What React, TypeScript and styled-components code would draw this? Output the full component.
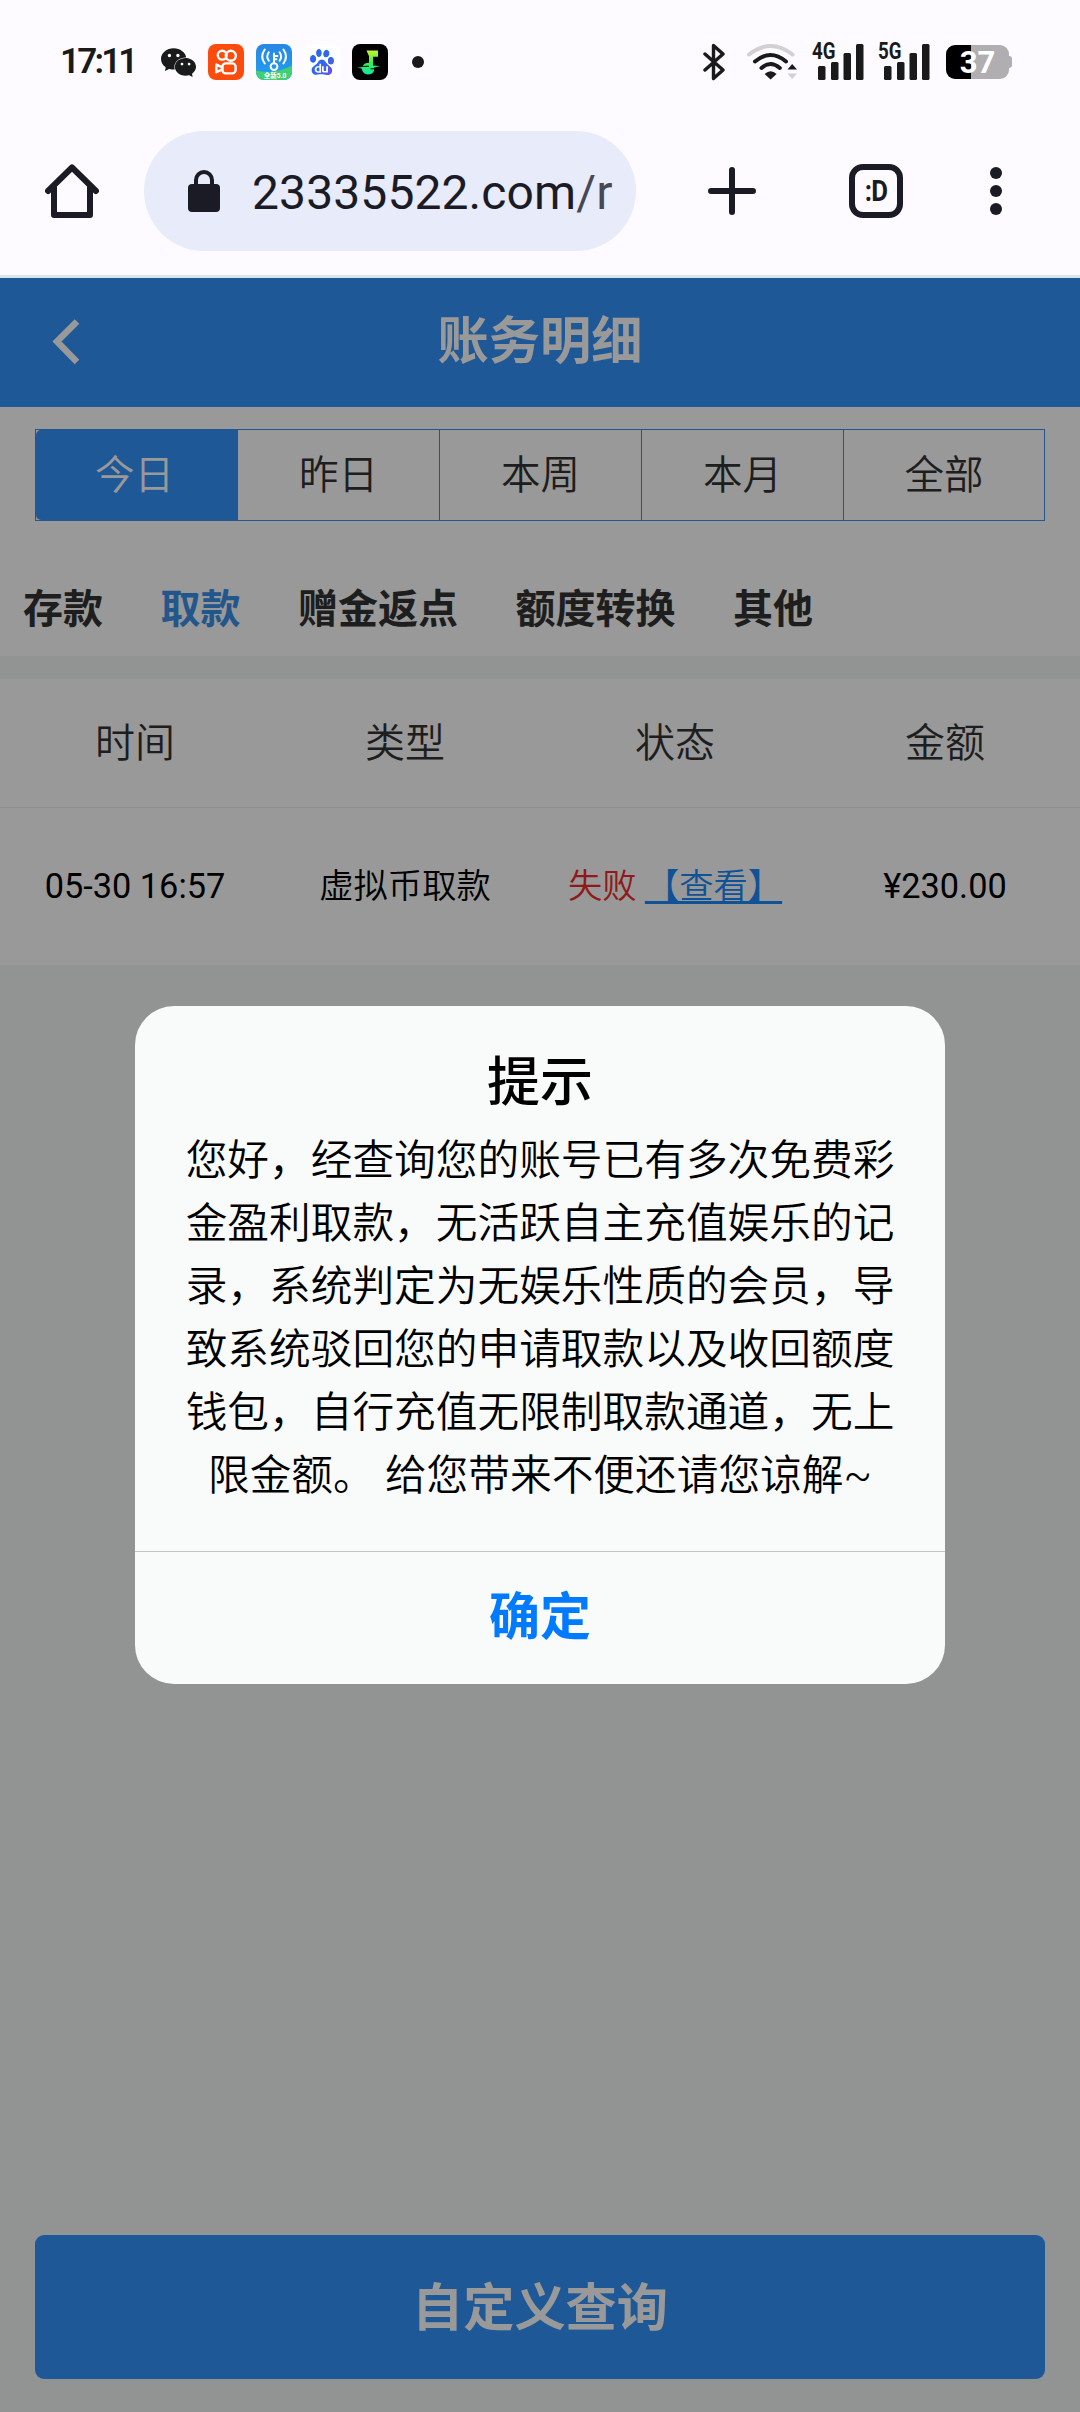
import React from 'react';
import styled, { createGlobalStyle } from 'styled-components';
import { SiBaidu, SiWechat } from 'react-icons/si';

const GlobalStyle = createGlobalStyle`
  *, *::before, *::after { box-sizing: border-box; }
  html, body { margin: 0; padding: 0; }
  body {
    width: 1080px;
    background: #fdfbff;
    font-family: Roboto, "Noto Sans CJK SC", sans-serif;
    color: #333;
  }
  button { font-family: inherit; border: 0; margin: 0; padding: 0; background: none; }
  svg { display: block; flex: none; }
`;

const Screen = styled.div`
  width: 1080px;
  height: 2412px;
  display: flex;
  flex-direction: column;
  overflow: hidden;
`;

/* ---------- system status bar ---------- */

const StatusBar = styled.header`
  height: 110px;
  padding: 14px 68px 0 60px;
  display: flex;
  align-items: center;
  justify-content: space-between;
  color: #1a1a1a;
`;

const StatusGroup = styled.div<{ $gap: number }>`
  display: flex;
  align-items: center;
  gap: ${(p) => p.$gap}px;
`;

const Clock = styled.span`
  width: 89px;
  font-size: 35px;
  line-height: 38px;
  font-weight: 600;
  letter-spacing: -2.8px;
  white-space: nowrap;
`;

const WechatIcon = styled(SiWechat)`
  width: 35px;
  height: 35px;
  margin-top: 1px;
`;

const BaiduTile = styled.span`
  width: 36px;
  height: 36px;
  display: grid;
  place-items: center;
  background: #fff;
  border-radius: 8px;
`;

const BaiduIcon = styled(SiBaidu)`
  width: 26px;
  height: 26px;
  path { fill: url(#baiduFill); }
`;

const MoreDot = styled.span`
  width: 12px;
  height: 12px;
  margin-left: 12px;
  border-radius: 50%;
  background: #1a1a1a;
`;

const Battery = styled.span`
  display: flex;
  align-items: center;
  margin-left: 2px;
`;

const BatteryBody = styled.span<{ $level: number }>`
  width: 63px;
  height: 34px;
  border-radius: 9px;
  background: linear-gradient(90deg, #000 ${(p) => p.$level * 0.67}px, #b1aeb2 ${(p) => p.$level * 0.67}px);
  color: #fff;
  font-size: 31px;
  font-weight: 700;
  line-height: 36px;
  text-align: center;
`;

const BatteryCap = styled.span`
  width: 3px;
  height: 12px;
  border-radius: 0 3px 3px 0;
  background: #b1aeb2;
`;

/* ---------- browser toolbar ---------- */

const BrowserBar = styled.div`
  height: 168px;
  padding: 0 78px 3px 45px;
  display: flex;
  align-items: center;
  border-bottom: 3px solid #dae3f0;
  color: #1a1b25;
`;

const AddressPill = styled.div`
  width: 492px;
  height: 120px;
  margin: 0 72px 0 45px;
  padding-left: 44px;
  display: flex;
  align-items: center;
  gap: 32px;
  border-radius: 60px;
  background: #e8ebfa;
`;

const Url = styled.span`
  font-size: 48px;
  line-height: 60px;
  letter-spacing: 0.1px;
  white-space: nowrap;
  margin-top: 3px;
`;

const UrlPath = styled.span`
  color: #464854;
`;

const TabCounter = styled.button`
  width: 54px;
  height: 54px;
  margin: 0 87px 0 93px;
  display: grid;
  place-items: center;
  border: 6px solid #1a1b25;
  border-radius: 14px;
  color: #1a1b25;
  font-family: "Roboto", sans-serif;
  font-size: 30px;
  line-height: 40px;
  font-weight: 700;
  letter-spacing: -1px;
`;

const TabFace = styled.span`
  transform: scaleX(0.86);
`;

const MenuDots = styled.div`
  display: flex;
  flex-direction: column;
  gap: 6px;
`;

const MenuDot = styled.span`
  width: 12px;
  height: 12px;
  border-radius: 50%;
  background: #1a1b25;
`;

/* ---------- web page ---------- */

const Page = styled.main`
  position: relative;
  flex: 1;
  display: flex;
  flex-direction: column;
  background: #f2f7f4;
`;

const TitleBar = styled.div`
  height: 129px;
  padding: 0 52px 2px;
  display: grid;
  grid-template-columns: 28px 1fr 28px;
  align-items: center;
  background: #3293fc;
  color: #fff;
`;

const PageTitle = styled.h1`
  margin: 0;
  text-align: center;
  font-size: 51.2px;
  line-height: 60px;
  font-weight: 700;
`;

const Filters = styled.section`
  height: 249px;
  padding-top: 22px;
  background: #fff;
`;

const RangeTabs = styled.div`
  height: 92px;
  margin: 0 35px;
  display: grid;
  grid-template-columns: repeat(4, 202px) 1fr;
  border: 1px solid #3c8fe8;
`;

const RangeTab = styled.button<{ $active?: boolean }>`
  padding-top: 2px;
  padding-right: ${(p) => (p.$active ? '5px' : '0')};
  font-size: 39.5px;
  line-height: 60px;
  font-weight: 350;
  color: ${(p) => (p.$active ? '#fff' : '#333')};
  background: ${(p) => (p.$active ? '#3293fc' : 'transparent')};
  border-radius: ${(p) => (p.$active ? '5px 0 0 5px' : '0')};
  & + & { border-right: 1px solid #3c8fe8; }
  &:last-child { border-right: 0; }
`;

const TypeTabs = styled.nav`
  height: 134px;
  padding: 43px 23px 0;
  display: flex;
  align-items: center;
  gap: 57.5px;
`;

const TypeTab = styled.button<{ $active?: boolean }>`
  font-size: 40px;
  line-height: 50px;
  font-weight: 700;
  color: ${(p) => (p.$active ? '#3b8fe8' : '#333')};
`;

const Table = styled.section`
  margin-top: 23px;
  background: #fff;
`;

const HeadRow = styled.div`
  height: 129px;
  padding-top: 2px;
  display: grid;
  grid-template-columns: repeat(4, 1fr);
  align-items: center;
  justify-items: center;
  border-bottom: 1px solid #ebebeb;
  font-size: 40px;
  line-height: 50px;
  font-weight: 350;
  color: #333;
`;

const DataRow = styled.div`
  height: 157px;
  padding-bottom: 1px;
  display: grid;
  grid-template-columns: repeat(4, 1fr);
  align-items: center;
  justify-items: center;
  font-size: 34.3px;
  line-height: 44px;
  color: #000;
  white-space: nowrap;
`;

const Cell = styled.span<{ $weight: number }>`
  font-weight: ${(p) => p.$weight};
`;

const Failed = styled.span`
  color: #f02a2a;
`;

const ViewLink = styled.a`
  color: #1989fa;
  text-decoration: underline;
  text-decoration-thickness: 3px;
  text-underline-offset: 3px;
  text-decoration-skip-ink: none;
`;

const QueryButton = styled.button`
  height: 144px;
  margin: auto 35px 33px;
  padding-top: 3px;
  border-radius: 9px;
  background: #3293fc;
  color: #fff;
  font-size: 51.2px;
  line-height: 60px;
  font-weight: 700;
`;

const Overlay = styled.div`
  position: absolute;
  inset: 0;
  display: flex;
  align-items: center;
  justify-content: center;
  background: rgba(0, 0, 0, 0.4);
`;

const Dialog = styled.div`
  width: 810px;
  height: 678px;
  display: flex;
  flex-direction: column;
  border-radius: 39px;
  background: #f9fbfa;
  color: #000;
  text-align: center;
  overflow: hidden;
`;

const DialogBody = styled.div`
  flex: 1;
  padding: 45px 0 0;
`;

const DialogTitle = styled.h2`
  margin: 0;
  font-size: 53px;
  line-height: 64px;
  font-weight: 500;
`;

const DialogText = styled.p`
  margin: 14px 48px 0;
  font-size: 41.7px;
  line-height: 63px;
  font-weight: 350;
`;

const ConfirmButton = styled.button`
  height: 133px;
  border-top: 1px solid #c4c6c5;
  color: #007aff;
  font-size: 51px;
  line-height: 60px;
  font-weight: 700;
`;

/* ---------- icons ---------- */

const KuaishouIcon = () => (
  <svg width="36" height="36" viewBox="0 0 36 36">
    <rect width="36" height="36" rx="8" fill="#fb4c0e" />
    <g fill="none" stroke="#fff" strokeWidth="2.4">
      <circle cx="14.2" cy="11.2" r="4.4" />
      <circle cx="22.8" cy="11.8" r="5" />
      <rect x="14.4" y="19.4" width="13.2" height="10" rx="3.4" />
      <path d="M14 23.2 8.4 20.6v7.6L14 25.6z" strokeLinejoin="round" />
    </g>
  </svg>
);

const WifiKeyIcon = () => (
  <svg width="36" height="36" viewBox="0 0 36 36">
    <defs>
      <linearGradient id="keyBg" x1="0" y1="0" x2="0" y2="1">
        <stop offset="0" stopColor="#2688e4" />
        <stop offset="1" stopColor="#239df2" />
      </linearGradient>
      <clipPath id="keyClip">
        <rect width="36" height="36" rx="8" />
      </clipPath>
    </defs>
    <g clipPath="url(#keyClip)">
      <rect width="36" height="36" fill="url(#keyBg)" />
      <path d="M0 26.5Q18 31 36 21.5V36H0z" fill="#3fcf74" />
      <g fill="none" stroke="#fff" strokeWidth="2" strokeLinecap="round">
        <circle cx="18" cy="22.6" r="3.4" />
        <path d="M18 19V9.5M18 12h3.4M18 15.2h2.4" />
        <path d="M12.8 8.2q-3 4.3 0 8.6M8.8 5.5q-5.200 7 0 14M23.6 8.2q3 4.3 0 8.6M27.4 5.5q5.2 7 0 14" />
      </g>
      <text x="19" y="34" textAnchor="middle" fontSize="6.6" fontWeight="700" fill="#fff" fontFamily='Roboto, "Noto Sans CJK SC", sans-serif'>
        全新5.0
      </text>
    </g>
  </svg>
);

const MusicIcon = () => (
  <svg width="36" height="36" viewBox="0 0 36 36">
    <defs>
      <linearGradient id="noteFill" x1="0" y1="0" x2="0" y2="1">
        <stop offset="0" stopColor="#c9f52e" />
        <stop offset="0.5" stopColor="#3bf04c" />
        <stop offset="1" stopColor="#12e8a8" />
      </linearGradient>
    </defs>
    <rect width="36" height="36" rx="8" fill="#000" />
    <path
      fill="url(#noteFill)"
      d="M14.500 6.500h11.500v6.200h-5v8.800l7.200.4-6 1.600q.4 7-6.200 7-5.600-.4-6.200-6l-4.600-.8 5-.8q1.600-4.200 6.800-4.200v-6.400z"
    />
    <path d="M10 22.300h7M18.500 24.800h5" stroke="#000" strokeWidth="1" />
  </svg>
);

const BaiduGradient = styled.svg`
  position: absolute;
`;

const BluetoothIcon = styled.svg`
  margin-right: 7px;
`;

const WifiIcon = () => (
  <svg width="52" height="38" viewBox="0 0 52 38" fill="none" strokeWidth="4" strokeLinecap="round">
    <path d="M3 11.500Q24.500-5.500 46.500 11.500" stroke="#d2d0d3" />
    <path d="M9 18.500Q24.500 5.500 40 18.500M15.500 25Q24.500 17 33.800 25" stroke="#1a1a1a" />
    <path d="M18.600 31q6-5.600 12 0l-6 5.400z" fill="#1a1a1a" />
    <path d="M41.500 26.500h9.500L46.200 21z" fill="#1a1a1a" />
    <path d="M41.500 30.500h9.500L46.200 36z" fill="#d2d0d3" />
  </svg>
);

const SignalBox = styled.svg`
  overflow: visible;
`;

const SignalIcon = ({ label }: { label: string }) => (
  <SignalBox width="52" height="50" viewBox="0 -6 52 50" fill="#1a1a1a">
    <text x="0" y="16" fontSize="23" fontWeight="700" fontFamily="Roboto, sans-serif" textLength="23.500" lengthAdjust="spacingAndGlyphs">
      {label}
    </text>
    <rect x="6" y="23" width="7.5" height="14" rx="1.5" />
    <rect x="19" y="19" width="7.5" height="18" rx="1.5" />
    <rect x="31.500" y="10" width="7.5" height="27" rx="1.5" />
    <rect x="44" y="1" width="7.5" height="36" rx="1.5" />
  </SignalBox>
);

const HomeIcon = () => (
  <svg width="54" height="54" viewBox="0 0 54 54" fill="none" stroke="#1a1b25" strokeWidth="6" strokeLinecap="round" strokeLinejoin="round">
    <path d="M3 27 27 3.500 51 27M9 23v28h36V23" />
  </svg>
);

const LockIcon = () => (
  <svg width="32" height="42" viewBox="0 0 32 42">
    <path d="M8 16V10a8 8 0 0 1 16 0v6" fill="none" stroke="#1a1b25" strokeWidth="4" />
    <rect y="14" width="32" height="28" rx="4" fill="#1a1b25" />
  </svg>
);

const PlusIcon = () => (
  <svg width="48" height="48" viewBox="0 0 48 48" stroke="#1a1b25" strokeWidth="6" strokeLinecap="round">
    <path d="M24 3v42M3 24h42" />
  </svg>
);

const BackIcon = () => (
  <svg width="28" height="46" viewBox="0 0 28 46" fill="none" stroke="#fff" strokeWidth="6.5">
    <path d="M25 2.500 5 22.500l20 20.500" />
  </svg>
);

/* ---------- data ---------- */

const ranges = ['今日', '昨日', '本周', '本月', '全部'];
const types = ['存款', '取款', '赠金返点', '额度转换', '其他'];
const columns = ['时间', '类型', '状态', '金额'];

export default function App() {
  return (
    <Screen>
      <GlobalStyle />
      <StatusBar>
        <StatusGroup $gap={12}>
          <Clock>17:11</Clock>
          <WechatIcon />
          <KuaishouIcon />
          <WifiKeyIcon />
          <BaiduTile>
            <BaiduIcon />
          </BaiduTile>
          <MusicIcon />
          <MoreDot />
          <BaiduGradient width="0" height="0">
            <linearGradient id="baiduFill" x1="0" y1="0" x2="1" y2="1">
              <stop offset="0" stopColor="#2468f2" />
              <stop offset="0.6" stopColor="#3466ec" />
              <stop offset="1" stopColor="#7a4be8" />
            </linearGradient>
          </BaiduGradient>
        </StatusGroup>
        <StatusGroup $gap={14}>
          <BluetoothIcon
            width="22"
            height="38"
            viewBox="0 0 22 38"
            fill="none"
            stroke="#1a1a1a"
            strokeWidth="3.4"
            strokeLinecap="round"
            strokeLinejoin="round"
          >
            <path d="M2 11 20 27 10.500 35.500V2.500L20 11 2 27" />
          </BluetoothIcon>
          <WifiIcon />
          <SignalIcon label="4G" />
          <SignalIcon label="5G" />
          <Battery>
            <BatteryBody $level={37}>37</BatteryBody>
            <BatteryCap />
          </Battery>
        </StatusGroup>
      </StatusBar>

      <BrowserBar>
        <HomeIcon />
        <AddressPill>
          <LockIcon />
          <Url>
            23335522.com<UrlPath>/r</UrlPath>
          </Url>
        </AddressPill>
        <PlusIcon />
        <TabCounter>
          <TabFace>:D</TabFace>
        </TabCounter>
        <MenuDots>
          <MenuDot />
          <MenuDot />
          <MenuDot />
        </MenuDots>
      </BrowserBar>

      <Page>
        <TitleBar>
          <BackIcon />
          <PageTitle>账务明细</PageTitle>
        </TitleBar>
        <Filters>
          <RangeTabs>
            {ranges.map((name, i) => (
              <RangeTab key={name} $active={i === 0}>
                {name}
              </RangeTab>
            ))}
          </RangeTabs>
          <TypeTabs>
            {types.map((name, i) => (
              <TypeTab key={name} $active={i === 1}>
                {name}
              </TypeTab>
            ))}
          </TypeTabs>
        </Filters>
        <Table>
          <HeadRow>
            {columns.map((name) => (
              <span key={name}>{name}</span>
            ))}
          </HeadRow>
          <DataRow>
            <Cell $weight={400}>05-30 16:57</Cell>
            <Cell $weight={350}>虚拟币取款</Cell>
            <Cell $weight={350}>
              <Failed>失败</Failed> <ViewLink>【查看】</ViewLink>
            </Cell>
            <Cell $weight={400}>¥230.00</Cell>
          </DataRow>
        </Table>
        <QueryButton>自定义查询</QueryButton>

        <Overlay>
          <Dialog role="dialog">
            <DialogBody>
              <DialogTitle>提示</DialogTitle>
              <DialogText>
                您好，经查询您的账号已有多次免费彩金盈利取款，无活跃自主充值娱乐的记录，系统判定为无娱乐性质的会员，导致系统驳回您的申请取款以及收回额度钱包，自行充值无限制取款通道，无上限金额。 给您带来不便还请您谅解~
              </DialogText>
            </DialogBody>
            <ConfirmButton>确定</ConfirmButton>
          </Dialog>
        </Overlay>
      </Page>
    </Screen>
  );
}
